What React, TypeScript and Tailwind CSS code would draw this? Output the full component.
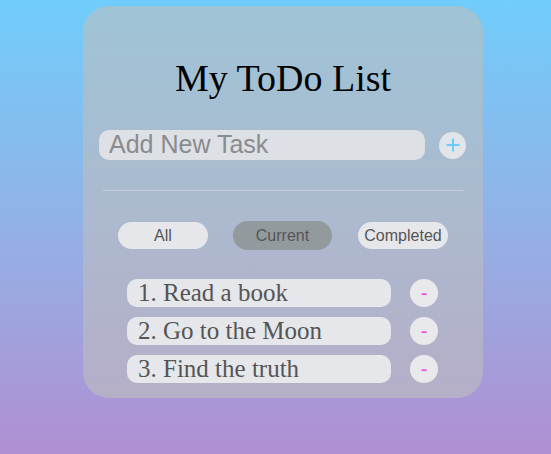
import React from "react";

const tasks = ["1. Read a book", "2. Go to the Moon", "3. Find the truth"];

export default function App() {
  return (
    <div className="w-[551px] h-[454px] overflow-hidden bg-[linear-gradient(180deg,#70cdfb_0%,#93b1e6_50%,#b08fd2_100%)]">
      <div className="pt-[6px] pl-[83px]">
        <div className="w-[400px] h-[392px] rounded-[26px] bg-[rgba(190,190,190,0.6)] flex flex-col">
          <h1
            className="mt-[49px] h-[46px] leading-[46px] text-[38px] text-black text-center"
            style={{ fontFamily: '"Liberation Serif", "Times New Roman", serif' }}
          >
            My ToDo List
          </h1>
          <div className="mt-[29px] flex items-center pl-[16px]">
            <div
              className="w-[326px] h-[30px] rounded-[10px] bg-[#dde0e4] flex items-center pl-[10px] text-[25px] text-[#898b8e]"
              style={{ fontFamily: '"Liberation Sans", Arial, sans-serif' }}
            >
              Add New Task
            </div>
            <div
              className="ml-[14px] w-[27px] h-[27px] rounded-full bg-[#e1e4e9] flex items-center justify-center"
            >
              <svg width="16" height="16" viewBox="0 0 16 16">
                <path d="M8 1.5V14.5M1.5 8H14.5" stroke="#6ccaf8" strokeWidth="2" />
              </svg>
            </div>
          </div>
          <div className="mt-[30px] mx-[20px] h-px bg-[#c6cbe0]" />
          <div
            className="mt-[30px] flex items-center pl-[35px] gap-[25px] text-[16px] text-[#555]"
            style={{ fontFamily: '"Liberation Sans", Arial, sans-serif' }}
          >
            <div className="w-[90px] h-[27px] rounded-full bg-[#e6e7ea] flex items-center justify-center">All</div>
            <div className="w-[99px] h-[29px] rounded-full bg-[#939a9e] flex items-center justify-center">Current</div>
            <div className="w-[90px] h-[27px] rounded-full bg-[#e6e7ea] flex items-center justify-center ml-px">Completed</div>
          </div>
          <div className="mt-[29px] flex flex-col gap-[10px] pl-[44px]">
            {tasks.map((t) => (
              <div key={t} className="flex items-center">
                <div
                  className="w-[264px] h-[28px] rounded-[10px] bg-[#e6e7ea] pl-[11px] text-[25px] leading-[28px] text-[#555]"
                  style={{ fontFamily: '"Liberation Serif", "Times New Roman", serif' }}
                >
                  {t}
                </div>
                <div
                  className="ml-[19px] w-[28px] h-[28px] rounded-full bg-[#e9e9ec] flex items-center justify-center text-[20px] leading-none text-[#ee44dd]"
                  style={{ fontFamily: '"Liberation Sans", Arial, sans-serif' }}
                >
                  -
                </div>
              </div>
            ))}
          </div>
        </div>
      </div>
    </div>
  );
}
